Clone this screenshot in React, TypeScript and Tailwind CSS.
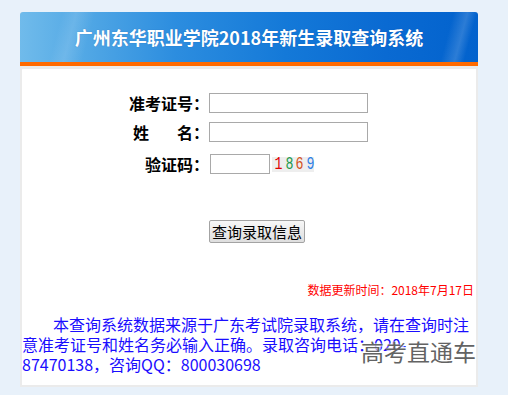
import React from 'react';

const CJK = "font-['Noto_Sans_CJK_SC',sans-serif]";

function FormRow({ label, children }: { label: React.ReactNode; children: React.ReactNode }) {
  return (
    <div className="flex items-center h-[20px]">
      <div className="w-[187px] text-right text-[16px] font-bold leading-[20px] text-black whitespace-nowrap">{label}</div>
      {children}
    </div>
  );
}

function Captcha() {
  // verification code image
  const digits = [
    { d: '1', c: 'text-[#e00000]' },
    { d: '8', c: 'text-[#1d9a4c]' },
    { d: '6', c: 'text-[#d2501a]' },
    { d: '9', c: 'text-[#2f7fe6]' },
  ];
  return (
    <div className="ml-[2px] flex items-center h-[15px] w-[42px] bg-[#eeeeee] pl-[1px] font-['Liberation_Mono',monospace] text-[19px] leading-[15px]">
      {digits.map((x) => (
        <span key={x.d} className={`${x.c} w-[10.5px] text-center scale-x-[0.7]`}>{x.d}</span>
      ))}
    </div>
  );
}

export default function App() {
  return (
    <div className={`relative w-[508px] h-[395px] overflow-hidden bg-[#e8f1fa] pt-[12px] pl-[20px] ${CJK}`}>
      <div className="w-[458px] bg-[#ebebeb] rounded-t-[3px]">
        {/* header */}
        <div className="h-[50px] rounded-t-[3px] flex items-center justify-center bg-[linear-gradient(105deg,rgba(255,255,255,0)_0%,rgba(255,255,255,0)_9%,rgba(255,255,255,0.12)_12%,rgba(255,255,255,0)_16%,rgba(255,255,255,0)_92%,rgba(255,255,255,0.16)_95%,rgba(255,255,255,0)_97%),linear-gradient(90deg,#70bbeb_0%,#52a8e5_14%,#2c8ddf_34%,#1479d8_58%,#0a6ad2_80%,#0262cd_100%)]">
          <h1 className="text-white text-[18px] font-bold leading-[24px] [text-shadow:0_0_1px_rgba(0,40,120,0.4)]">
            广州东华职业学院2018年新生录取查询系统
          </h1>
        </div>
        <div className="h-[4px] bg-[#ff6a00]" />
        <div className="px-[2px] pt-[3px] pb-[2px]">
          <div className="h-[316px] bg-white flex flex-col pt-[24px]">
            <FormRow label="准考证号：">
              <input className="w-[159px] h-[20px] border border-[#a9a9a9] bg-white outline-none" />
            </FormRow>
            <div className="mt-[9px]">
              <FormRow
                label={
                  <>
                    姓<span className="inline-block w-[28px]" />名：
                  </>
                }
              >
                <input className="w-[159px] h-[20px] border border-[#a9a9a9] bg-white outline-none" />
              </FormRow>
            </div>
            <div className="mt-[12px]">
              <FormRow label="验证码：">
                <input className="ml-[1px] w-[60px] h-[20px] border border-[#a9a9a9] bg-white outline-none" />
                <Captcha />
              </FormRow>
            </div>
            <div className="mt-[45px] pl-[187px]">
              <button className="h-[23px] w-[96px] border border-[#a3a3a3] rounded-[2px] bg-[linear-gradient(#f7f7f7,#dedede)] text-[15px] leading-[21px] text-black">
                查询录取信息
              </button>
            </div>
            <div className="mt-[39px] pr-[2px] text-right text-[12px] leading-[16px] text-[#ff0000]">
              数据更新时间：2018年7月17日
            </div>
            <p className="mt-[16px] text-[16px] leading-[20px] text-[#1a0dff] indent-[31px]">
              本查询系统数据来源于广东考试院录取系统，请在查询时注意准考证号和姓名务必输入正确。录取咨询电话：020-<wbr />87470138，咨询QQ：800030698
            </p>
          </div>
        </div>
      </div>
      {/* watermark */}
      <div className="absolute left-[361px] top-[337px] text-[23px] leading-[28px] text-[#636363] [text-shadow:1px_1px_1px_rgba(255,255,255,0.9),-1px_-1px_1px_rgba(255,255,255,0.6)] whitespace-nowrap">
        高考直通车
      </div>
    </div>
  );
}
